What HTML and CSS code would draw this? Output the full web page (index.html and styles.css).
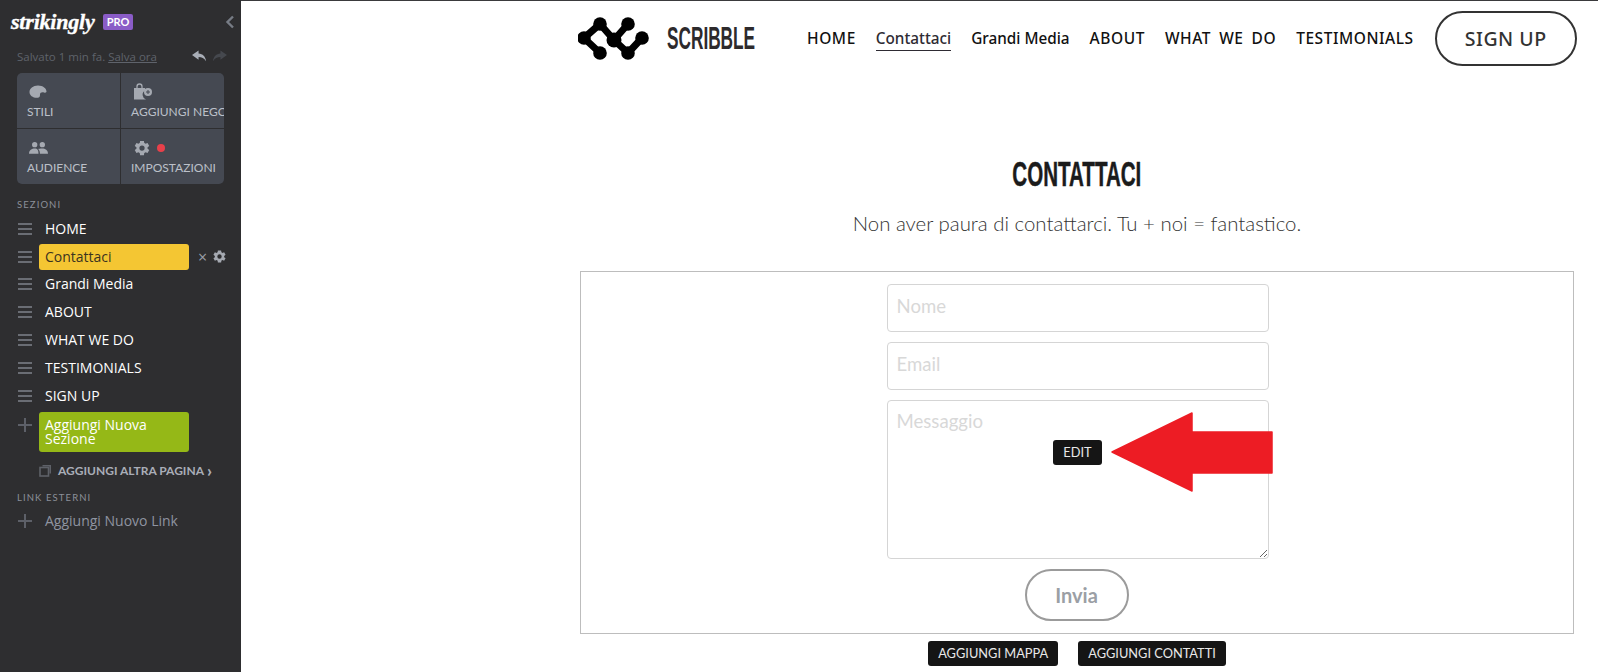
FILE: index.html
```html
<!DOCTYPE html>
<html lang="it">
<head>
<meta charset="utf-8">
<title>Strikingly editor</title>
<link rel="stylesheet" href="styles.css">
</head>
<body>
<div class="app">
  <aside class="side">
    <div class="brand">
      <span class="wordmark">strikingly</span>
      <span class="pro">PRO</span>
      <svg class="collapse" viewBox="0 0 10 14" width="10" height="14"><path d="M8 1.500 2.500 7 8 12.500" fill="none" stroke="#777c85" stroke-width="2.400"/></svg>
    </div>
    <div class="saved">
      <span class="saved-text">Salvato 1 min fa. <u>Salva ora</u></span>
      <svg class="undo" viewBox="0 0 16 12" width="15" height="12"><path d="M7 0 0 5l7 5V7c3.500 0 6 1 8 4.500C14.500 6.500 11.500 3.500 7 3.200z" fill="#a9aeb7"/></svg>
      <svg class="redo" viewBox="0 0 16 12" width="15" height="12"><path d="M9 0l7 5-7 5V7c-3.500 0-6 1-8 4.500C1.500 6.500 4.500 3.500 9 3.200z" fill="#45484e"/></svg>
    </div>
    <div class="tiles">
      <div class="tile">
        <svg class="tile-icon" viewBox="0 0 18 14" width="18" height="14"><path d="M9 0.500C14 0.500 17.500 3.500 17.500 6.500 17.500 7.500 16.500 8 15 7.500 13 6.800 11 7.500 11 9.500 11 11 11 12.500 9 12.800 4 13.200 0.500 10.500 0.500 7 0.500 3.500 4 0.500 9 0.500z" fill="#a5a9b1"/></svg>
        <span>STILI</span>
      </div>
      <div class="tile">
        <svg class="tile-icon" viewBox="0 0 20 18" width="20" height="18"><path d="M1 5h11v2.500a5 5 0 0 0 1 9H1z" fill="#a5a9b1"/><path d="M4 6V3.500a2.500 2.500 0 0 1 5 0V6" fill="none" stroke="#a5a9b1" stroke-width="1.300"/><circle cx="15" cy="9" r="4" fill="#a5a9b1"/><path d="M15 7v4M13 9h4" stroke="#454952" stroke-width="1"/></svg>
        <span>AGGIUNGI NEGOZIO</span>
      </div>
      <div class="tile">
        <svg class="tile-icon" viewBox="0 0 20 14" width="19" height="14"><circle cx="6" cy="3.500" r="2.800" fill="#a5a9b1"/><circle cx="14" cy="3.500" r="2.800" fill="#a5a9b1"/><path d="M0 13c0-4 3-5.500 6-5.500S10 9 10 13zM11.500 13c0-2-.5-3.800-1.800-5 1-.4 3-.6 4.300-.5 3 0 6 1.500 6 5.500z" fill="#a5a9b1"/></svg>
        <span>AUDIENCE</span>
      </div>
      <div class="tile">
        <div class="tile-icon with-dot">
          <svg viewBox="0 0 24 24" width="18" height="18"><path d="M19.400 13a7.600 7.600 0 0 0 0-2l2.300-1.800-2.300-4-2.700 1.100a7.500 7.500 0 0 0-1.700-1L14.600 2.500H9.400L9 5.300a7.500 7.500 0 0 0-1.700 1L4.600 5.200l-2.300 4L4.600 11a7.600 7.600 0 0 0 0 2l-2.300 1.800 2.300 4 2.700-1.100a7.500 7.500 0 0 0 1.700 1l.4 2.800h5.200l.4-2.800a7.500 7.500 0 0 0 1.700-1l2.700 1.100 2.300-4zM12 15.500a3.500 3.500 0 1 1 0-7 3.500 3.500 0 0 1 0 7z" fill="#a5a9b1" fill-rule="evenodd"/></svg>
          <i class="dot"></i>
        </div>
        <span>IMPOSTAZIONI</span>
      </div>
    </div>

    <div class="label first">SEZIONI</div>
    <ul class="sections">
      <li class="row"><i class="burger"></i><span class="name">HOME</span></li>
      <li class="row"><i class="burger"></i><span class="name active">Contattaci</span><span class="close">×</span>
        <svg viewBox="0 0 24 24" width="15" height="15"><path d="M19.400 13a7.600 7.600 0 0 0 0-2l2.300-1.800-2.300-4-2.700 1.100a7.500 7.500 0 0 0-1.700-1L14.600 2.500H9.400L9 5.300a7.500 7.500 0 0 0-1.700 1L4.600 5.200l-2.300 4L4.600 11a7.600 7.600 0 0 0 0 2l-2.300 1.800 2.300 4 2.700-1.100a7.500 7.500 0 0 0 1.700 1l.4 2.800h5.200l.4-2.800a7.500 7.500 0 0 0 1.700-1l2.700 1.100 2.300-4zM12 15.500a3.500 3.500 0 1 1 0-7 3.500 3.500 0 0 1 0 7z" fill="#a5a9b1" fill-rule="evenodd"/></svg>
      </li>
      <li class="row"><i class="burger"></i><span class="name">Grandi Media</span></li>
      <li class="row"><i class="burger"></i><span class="name">ABOUT</span></li>
      <li class="row"><i class="burger"></i><span class="name">WHAT WE DO</span></li>
      <li class="row"><i class="burger"></i><span class="name">TESTIMONIALS</span></li>
      <li class="row"><i class="burger"></i><span class="name">SIGN UP</span></li>
    </ul>
    <div class="add-row">
      <i class="plus"></i>
      <span class="add-btn">Aggiungi Nuova Sezione</span>
    </div>
    <div class="page-row">
      <svg viewBox="0 0 13 13" width="13" height="13"><path d="M3.500 1h8.500v8.500h-1.500V2.500h-7z" fill="#5e6168"/><rect x="1" y="3.500" width="8.500" height="8.500" fill="none" stroke="#5e6168" stroke-width="1.600"/></svg>
      <span>AGGIUNGI ALTRA PAGINA</span><b>›</b>
    </div>
    <div class="label">LINK ESTERNI</div>
    <div class="link-row"><i class="plus"></i><span>Aggiungi Nuovo Link</span></div>
  </aside>

  <main class="main">
    <header class="top">
      <a class="logo">
        <svg viewBox="0 0 72 44" width="72" height="44"><g fill="none" stroke="#000" stroke-width="7" stroke-linecap="round" stroke-linejoin="round"><path d="M22 7 6 21l16 15M22 7l14 16M50 7 36 23l14 13 14-15"/></g><g fill="#000"><circle cx="22" cy="7" r="6.800"/><circle cx="50" cy="7" r="6.800"/><circle cx="6" cy="21" r="6.800"/><circle cx="64" cy="21" r="6.800"/><circle cx="36" cy="23" r="7.500"/><circle cx="22" cy="36" r="6.800"/><circle cx="50" cy="36" r="6.800"/></g></svg>
        <span class="logo-text">SCRIBBLE</span>
      </a>
      <nav class="nav">
        <a class="caps">HOME</a>
        <a class="current">Contattaci</a>
        <a>Grandi Media</a>
        <a class="caps">ABOUT</a>
        <a class="caps">WHAT WE DO</a>
        <a class="caps">TESTIMONIALS</a>
      </nav>
      <a class="signup">SIGN UP</a>
    </header>

    <section class="content">
      <h1 class="title"><span>CONTATTACI</span></h1>
      <p class="sub">Non aver paura di contattarci. Tu + noi = fantastico.</p>
      <form class="box">
        <input class="field" type="text" placeholder="Nome">
        <input class="field" type="text" placeholder="Email">
        <textarea class="field area" placeholder="Messaggio"></textarea>
        <button class="send" type="button">Invia</button>
        <span class="tag edit">EDIT</span>
        <svg class="arrow" viewBox="0 0 162 80" width="162" height="80"><path d="M1 40 81 1v19h80v41H81v18z" fill="#ed1c24" stroke="#ed1c24" stroke-width="1.500" stroke-linejoin="round"/></svg>
      </form>
      <div class="actions">
        <span class="tag">AGGIUNGI MAPPA</span>
        <span class="tag">AGGIUNGI CONTATTI</span>
      </div>
    </section>
  </main>
</div>
</body>
</html>
```
FILE: styles.css
```css
* { box-sizing: border-box; }
html, body { margin: 0; height: 672px; overflow: hidden; background: #fff; }
ul { list-style: none; margin: 0; padding: 0; }
i { display: block; }

.app { display: flex; height: 672px; border-top: 1px solid #3a3a3c; }

/* sidebar */
.side {
  width: 241px;
  flex: none;
  background: #2e2e30;
  font-family: "Open Sans", sans-serif;
  color: #fff;
  margin-top: -1px;
}
.brand {
  display: flex;
  align-items: center;
  height: 34px;
  margin-top: 5px;
  padding-left: 11px;
}
.wordmark {
  font-family: "Liberation Serif", serif;
  font-style: italic;
  font-weight: 700;
  font-size: 22px;
  width: 92px;
  letter-spacing: -0.2px;
  -webkit-text-stroke: 0.4px #fff;
}
.pro {
  width: 30px;
  height: 16px;
  border-radius: 2px;
  background: #8a5cc7;
  font-family: "Lato", sans-serif;
  font-weight: 700;
  font-size: 11px;
  line-height: 16px;
  text-align: center;
}
.collapse { margin-left: 92px; }
.saved {
  display: flex;
  align-items: center;
  height: 20px;
  margin-top: 7px;
  padding-left: 17px;
}
.saved-text { font-size: 11.5px; color: #5f636b; width: 175px; white-space: nowrap; }
.redo { margin-left: 5px; }
.tiles {
  display: grid;
  grid-template-columns: 103px 103px;
  grid-template-rows: 55px 55px;
  gap: 1px;
  width: 207px;
  margin: 7px 0 0 17px;
  border-radius: 5px;
  overflow: hidden;
  background: #2e2e30;
}
.tile {
  background: #454952;
  padding: 10px 0 0 10px;
  overflow: hidden;
  white-space: nowrap;
  font-family: "Lato", sans-serif;
  font-size: 12px;
  color: #bcc0c9;
}
.tile span { display: block; }
.tile-icon { display: block; height: 18px; margin: 0 0 3px 2px; }
.with-dot { display: flex; align-items: center; gap: 6px; }
.dot { width: 8px; height: 8px; border-radius: 50%; background: #e8404a; }

.label {
  font-family: "Lato", sans-serif;
  font-size: 9.500px;
  letter-spacing: 1.100px;
  color: #8c9099;
  margin: 14px 0 0 17px;
  line-height: 12px;
}
.label.first { margin-top: 15px; }
.sections { margin-top: 4px; }
.row {
  display: flex;
  align-items: center;
  height: 27.800px;
  padding-left: 18px;
  font-size: 14px;
}
.burger {
  width: 14px;
  height: 12px;
  margin-right: 7px;
  border-top: 2px solid #6a6d74;
  border-bottom: 2px solid #6a6d74;
  background: linear-gradient(#6a6d74, #6a6d74) center / 100% 2px no-repeat;
}
.name {
  display: block;
  width: 150px;
  padding-left: 6px;
  line-height: 26px;
  white-space: nowrap;
}
.active {
  background: #f4c633;
  color: #3b3320;
  border-radius: 3px;
}
.close { margin: 0 5px 0 9px; color: #9a9ea7; font-size: 16px; line-height: 1; }
.add-row {
  display: flex;
  align-items: flex-start;
  margin-top: 2px;
  padding-left: 18px;
}
.plus {
  width: 14px;
  height: 14px;
  margin: 6px 7px 0 0;
  background:
    linear-gradient(#5d6068, #5d6068) center / 100% 2px no-repeat,
    linear-gradient(#5d6068, #5d6068) center / 2px 100% no-repeat;
}
.add-btn {
  display: block;
  width: 150px;
  height: 40px;
  padding: 6px 40px 0 6px;
  background: #95b817;
  border-radius: 3px;
  font-size: 14px;
  line-height: 14px;
}
.page-row {
  display: flex;
  align-items: center;
  height: 14px;
  margin-top: 12px;
  padding-left: 39px;
  font-family: "Lato", sans-serif;
  font-weight: 700;
  font-size: 12px;
  color: #a9adb7;
  white-space: nowrap;
}
.page-row span { margin-left: 6px; }
.page-row b { margin-left: 3px; font-size: 17px; line-height: 14px; font-weight: 900; }
.page-row + .label { margin-top: 14px; }
.link-row {
  display: flex;
  align-items: center;
  margin-top: 6px;
  padding-left: 18px;
  font-size: 14px;
  color: #8f94a0;
  height: 22px;
}
.link-row .plus { margin-top: 0; margin-right: 7px; }
.link-row span { padding-left: 6px; }

/* main column */
.main {
  flex: 1;
  min-width: 0;
  padding-left: 337px;
}
.top {
  display: flex;
  align-items: center;
  width: 1000px;
  height: 65px;
  padding-top: 10px;
}
.logo { display: flex; align-items: center; }
.logo-text {
  display: inline-block;
  margin-left: 17px;
  width: 88px;
  font-family: "Liberation Sans", sans-serif;
  font-weight: 700;
  font-size: 30.500px;
  color: #2d2a2c;
  transform: scaleX(0.565);
  transform-origin: left center;
  white-space: nowrap;
}
.nav {
  display: flex;
  gap: 20px;
  margin-left: 52px;
  padding-top: 2px;
  font-family: "Noto Sans", sans-serif;
  font-weight: 500;
  font-size: 15.300px;
  color: #111;
}
.nav a { white-space: nowrap; line-height: 21px; border-bottom: 1px solid transparent; padding-bottom: 1px; }
.nav .caps { font-size: 15.500px; letter-spacing: 0.55px; word-spacing: 3.500px; }
.nav .current { color: #2e2b33; border-bottom-color: #2e2b33; }
.signup {
  margin-left: 21px;
  width: 142px;
  height: 55px;
  border: 2px solid #333;
  border-radius: 28px;
  font-family: "Noto Sans", sans-serif;
  font-weight: 500;
  font-size: 19.500px;
  line-height: 51px;
  text-align: center;
  color: #333;
  letter-spacing: 0.5px;
}
.content { width: 994px; margin-left: 2px; }
.title {
  margin: 88px 0 0;
  font-family: "Liberation Sans", sans-serif;
  font-weight: 700;
  font-size: 35px;
  line-height: 40px;
  color: #1b1b1b;
  text-align: center;
}
.title span { display: inline-block; transform: scaleX(0.587); -webkit-text-stroke: 0.5px #1b1b1b; }
.sub {
  margin: 15px 0 0;
  font-family: "Lato", sans-serif;
  font-weight: 300;
  font-size: 20.400px;
  line-height: 28px;
  color: #333;
  text-align: center;
}
.box {
  position: relative;
  display: flex;
  flex-direction: column;
  align-items: center;
  height: 363px;
  margin-top: 34px;
  padding: 12px 0 0 1px;
  border: 1px solid #bdbdbd;
}
.field {
  display: block;
  width: 382px;
  height: 48px;
  margin-bottom: 10px;
  padding: 0 9px 5px;
  border: 1px solid #d5d5d5;
  border-radius: 4px;
  font-family: "Lato", sans-serif;
  font-size: 18.600px;
  background: #fff;
  outline: none;
}
.field::placeholder { color: #d8d8d8; opacity: 1; }
.area { height: 159px; padding-top: 9px; resize: both; }
.send {
  width: 104px;
  height: 52px;
  margin: 0 0 0 -2px;
  background: #fff;
  border: 2px solid #9b9b9b;
  border-radius: 26px;
  font-family: "Lato", sans-serif;
  font-weight: 700;
  font-size: 20px;
  color: #9b9fa5;
}
.tag {
  display: inline-block;
  height: 25px;
  padding: 0 10px;
  background: #151515;
  border-radius: 3px;
  font-family: "Lato", sans-serif;
  font-size: 12.800px;
  line-height: 25px;
  color: #e9e9e9;
  white-space: nowrap;
}
.edit { position: absolute; left: 472px; top: 168px; width: 49px; padding: 0; text-align: center; }
.arrow { position: absolute; left: 530px; top: 140px; }
.actions {
  display: flex;
  justify-content: center;
  gap: 20px;
  margin-top: 7px;
}
```
